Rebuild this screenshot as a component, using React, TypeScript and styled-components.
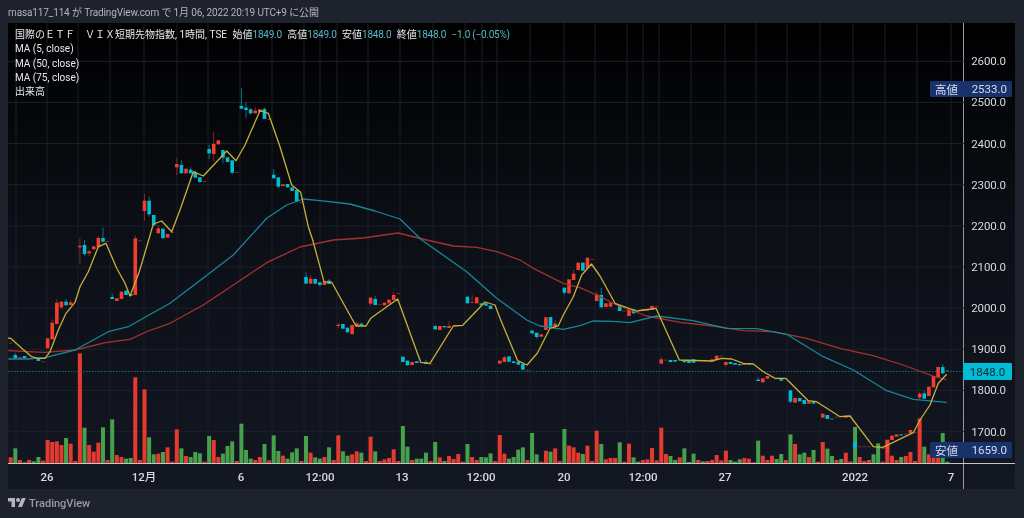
import React from 'react';
import styled, { createGlobalStyle } from 'styled-components';

const FONT = `Roboto, "Noto Sans CJK JP", sans-serif`;

const GlobalStyle = createGlobalStyle`
  html, body {
    margin: 0;
    padding: 0;
    background: #1e222d;
  }
  body {
    font-family: ${FONT};
    overflow: hidden;
  }
`;

const Page = styled.div`
  width: 1024px;
  height: 518px;
  display: flex;
  flex-direction: column;
  background: #1e222d;
  filter: blur(0.35px);
`;

const PublishLine = styled.div`
  height: 23px;
  padding: 5px 8px 0;
  box-sizing: border-box;
  font-size: 10px;
  line-height: 16px;
  letter-spacing: -0.13px;
  color: #b2b5be;
  white-space: nowrap;
`;

const ChartPanel = styled.div`
  position: relative;
  width: 1007px;
  height: 466px;
  margin-left: 8px;
  display: grid;
  grid-template-columns: 956px 51px;
  grid-template-rows: 441px 25px;
  background: linear-gradient(180deg, #000000 0%, #0c0f16 45%, #131722 100%);
`;

const Plot = styled.div`
  position: relative;
  overflow: hidden;
`;

const ChartSvg = styled.svg`
  display: block;
  width: 956px;
  height: 441px;
`;

const Legend = styled.div`
  position: absolute;
  left: 7px;
  top: 5px;
  font-size: 10px;
  line-height: 14.25px;
  color: #e6e8ee;
  white-space: nowrap;
`;

const LegendRow = styled.div`
  display: flex;
  gap: 5.5px;
`;

const LegendItem = styled.span`
  display: inline-flex;
`;

const LegendValue = styled.span`
  color: #53b9c4;
  letter-spacing: -0.25px;
`;

const PriceAxis = styled.div`
  display: flex;
  flex-direction: column;
  align-items: center;
  padding: 17.7px 2px 0 0;
  box-sizing: border-box;
  border-left: 1px solid #9598a1;
  margin-left: -1px;
`;

const PriceTick = styled.div`
  flex: 0 0 41.15px;
  display: flex;
  align-items: center;
  font-size: 11.5px;
  letter-spacing: -0.15px;
  color: #d8dae0;
`;

const TimeAxis = styled.div`
  position: relative;
  border-top: 1px solid #c4c6cc;
  margin-top: -1px;
`;

const TimeLabel = styled.span<{ $x: number }>`
  position: absolute;
  top: 4px;
  left: ${p => p.$x}px;
  transform: translateX(-50%);
  font-size: 11.5px;
  line-height: 18px;
  font-weight: 500;
  color: #d8dae0;
  white-space: nowrap;
`;

const AxisCorner = styled.div`
  border-top: 1px solid #c4c6cc;
  border-left: 1px solid #9598a1;
  margin: -1px 0 0 -1px;
`;

const PriceTag = styled.div<{ $top: number }>`
  position: absolute;
  top: ${p => p.$top}px;
  right: 3px;
  width: 82px;
  height: 16px;
  padding: 0 5px;
  box-sizing: border-box;
  display: flex;
  justify-content: space-between;
  align-items: center;
  border-radius: 1px;
  background: #18326b;
  color: #d8dee9;
  font-size: 11.5px;
`;

const LastPrice = styled.div`
  position: absolute;
  top: 340px;
  right: 3px;
  width: 49px;
  height: 17px;
  display: flex;
  justify-content: center;
  align-items: center;
  border-radius: 1px;
  background: #00bcd4;
  color: #0d2a30;
  font-size: 11.5px;
`;

const Footer = styled.div`
  flex: 1;
  display: flex;
  align-items: center;
  gap: 3px;
  padding: 0 8px 1px;
  color: #9a9da6;
  font-size: 11px;
  font-weight: 500;
`;

const BODY_RED = '#f23d2f';
const BODY_CYAN = '#00bcd4';
const WICK_RED = '#8f2c28';
const WICK_CYAN = '#0b7f92';

const xOf = (i: number) => 10.7 + 4.614 * i;

// volume bar tops as read off the chart, negative = green
const VOL_A = [
  712, -685, 720, -727, 720, -724, -711, 722, 660, 666, 664, 675, -654, 671, 723, 400, -623, 675, 695, 668, -622, 720,
  -598, 705, 711, -716, -714, 472, 720, 508, -652, -703, 701, -696, 682, 725, 628, -685, 708, -711, -696, -700, 725,
  -648, 660, 711, -701, -678, -664, 723, -611, -690, -716, 720, 711, -672, 721, -646, -693, 707, -716, -697, -685,
];
const VOL_B = [
  663, -588, 638, -652, -656, 651, -622, 660, 586, -634, -647, 643, 634, -638, 663, 590, -634, 663, 658, 654, 628, 663,
  -558, -620, 660, -656, -656, -638, 663, -606, 652, -663, 648, 657, 642, 665, -612, 651, 660, -651, -652, -640, 663,
  585, 641, -656, -651, -629, -622, 660, -579, -643, 665, 632, -635, 625, 663, -567, 617, 622, 638, -642, 617, 663, 572,
  -612, 658, 654, 654, -607, 665, 611, -652, -665, 660, 658, 624, 661, 563, 642, -648, -660, 652, -625, -666, -641, 660,
  -664, 663, 660, 645, 661, 632, -660, -665, -658, 654, 656, 667, -602, 647, 660, 647, -657, -642, 660, -583, 612, -643,
  -638, 651, -630, 665, 606, -626, -648, 660, -657, 638, 664, -561, 651, 663, 660, -643, -610, 665, 599, 647, 660, -651,
  648, 636, 663, 535, -620, 643, 652, 652, -579, -665,
];

const volumes = [
  ...VOL_A.map(v => ({ top: 220 + Math.abs(v) / 3, up: v > 0 })),
  ...VOL_B.map(v => ({ top: 240 + Math.abs(v) / 3, up: v > 0 })),
];

type Row = [number, number, number, number, number, string];

// [index, body top, body bottom, wick top, wick bottom, kind], r/c = body, d = thin dash
const group = (base: number, rows: Row[]) =>
  rows.map(([i, t, b, wt, wb, k]) => ({
    i,
    top: base + t / 3,
    bot: base + b / 3,
    wt: base + (wt || t) / 3,
    wb: base + (wb || b) / 3,
    k,
  }));

const candles = [
  ...group(330, [
    [0, 38, 40, 0, 0, 'dr'],
    [1, 75, 85, 69, 86, 'c'],
    [2, 82, 85, 0, 0, 'r'],
    [3, 78, 84, 0, 0, 'c'],
    [4, 86, 88, 0, 0, 'dr'],
    [6, 87, 93, 0, 0, 'c'],
    [7, 94, 96, 0, 0, 'dr'],
  ]),
  ...group(220, [
    [8, 355, 385, 0, 0, 'r'],
    [9, 308, 358, 298, 0, 'r'],
    [10, 248, 312, 238, 0, 'r'],
    [11, 245, 262, 0, 266, 'r'],
    [12, 245, 256, 238, 0, 'c'],
    [13, 247, 255, 240, 0, 'r'],
  ]),
  ...group(80, [
    [15, 497, 502, 475, 553, 'r'],
    [16, 495, 522, 480, 527, 'c'],
    [17, 514, 520, 508, 528, 'r'],
    [18, 499, 508, 0, 0, 'r'],
    [19, 474, 502, 468, 0, 'r'],
    [20, 474, 485, 442, 488, 'c'],
    [21, 483, 485, 0, 0, 'dr'],
    [22, 651, 657, 640, 0, 'c'],
    [23, 655, 663, 0, 0, 'r'],
    [24, 635, 657, 0, 0, 'r'],
    [25, 632, 645, 0, 0, 'c'],
    [26, 642, 648, 0, 0, 'c'],
    [27, 475, 645, 466, 0, 'r'],
    [28, 481, 483, 0, 0, 'dr'],
    [29, 362, 393, 342, 422, 'r'],
    [30, 362, 403, 350, 410, 'c'],
    [31, 405, 436, 0, 0, 'c'],
    [32, 445, 460, 436, 0, 'r'],
    [33, 446, 474, 0, 478, 'c'],
    [34, 462, 473, 0, 0, 'r'],
    [35, 456, 458, 0, 0, 'dr'],
    [36, 252, 262, 235, 285, 'r'],
    [37, 255, 280, 240, 0, 'c'],
    [38, 266, 280, 0, 0, 'r'],
    [39, 269, 280, 262, 0, 'c'],
    [40, 278, 293, 272, 0, 'c'],
    [41, 292, 306, 0, 309, 'c'],
    [42, 303, 305, 0, 0, 'dr'],
    [43, 207, 220, 195, 237, 'c'],
    [44, 192, 222, 155, 245, 'r'],
    [45, 181, 193, 0, 0, 'r'],
    [46, 210, 233, 0, 250, 'c'],
    [47, 232, 246, 0, 0, 'c'],
    [48, 241, 278, 0, 283, 'c'],
    [49, 276, 278, 0, 0, 'dr'],
    [50, 78, 86, 25, 88, 'c'],
    [51, 83, 90, 67, 113, 'c'],
    [52, 88, 100, 85, 104, 'c'],
    [53, 92, 100, 82, 0, 'r'],
    [54, 88, 96, 0, 0, 'r'],
    [55, 87, 117, 83, 0, 'c'],
    [56, 117, 119, 0, 0, 'dr'],
    [57, 284, 295, 268, 0, 'c'],
    [58, 292, 320, 0, 325, 'c'],
    [59, 313, 318, 0, 0, 'r'],
    [60, 312, 322, 0, 0, 'c'],
    [61, 322, 333, 0, 0, 'c'],
    [62, 330, 365, 0, 0, 'c'],
    [63, 366, 368, 0, 0, 'dr'],
  ]),
  ...group(240, [
    [64, 111, 131, 97, 0, 'c'],
    [65, 116, 131, 105, 0, 'r'],
    [66, 117, 131, 0, 0, 'c'],
    [67, 127, 135, 0, 140, 'c'],
    [68, 124, 135, 0, 0, 'r'],
    [69, 122, 132, 117, 0, 'c'],
    [71, 254, 258, 250, 265, 'r'],
    [72, 252, 266, 0, 0, 'c'],
    [73, 263, 277, 0, 0, 'c'],
    [74, 255, 282, 0, 285, 'r'],
    [75, 250, 258, 245, 0, 'r'],
    [76, 251, 257, 248, 0, 'c'],
    [78, 173, 191, 0, 198, 'r'],
    [79, 177, 195, 168, 0, 'c'],
    [80, 193, 195, 0, 0, 'dr'],
    [81, 188, 196, 0, 0, 'r'],
    [82, 179, 190, 0, 0, 'r'],
    [83, 165, 180, 155, 0, 'r'],
    [84, 159, 161, 0, 0, 'dr'],
    [85, 350, 366, 0, 0, 'c'],
    [86, 362, 376, 0, 0, 'c'],
    [87, 366, 375, 0, 0, 'r'],
    [88, 364, 369, 0, 0, 'c'],
    [90, 366, 372, 360, 0, 'c'],
    [91, 371, 373, 0, 0, 'dr'],
    [92, 258, 268, 255, 270, 'c'],
    [93, 258, 270, 0, 0, 'r'],
    [94, 258, 262, 0, 0, 'c'],
    [95, 258, 264, 242, 0, 'r'],
    [99, 170, 190, 0, 0, 'c'],
    [100, 187, 189, 165, 0, 'r'],
    [101, 172, 190, 0, 0, 'r'],
    [102, 190, 195, 0, 0, 'c'],
    [103, 190, 197, 0, 0, 'c'],
    [104, 197, 207, 0, 0, 'c'],
    [106, 362, 371, 0, 0, 'r'],
    [107, 352, 366, 347, 0, 'r'],
    [108, 349, 365, 0, 0, 'c'],
    [109, 364, 369, 0, 0, 'c'],
    [110, 366, 374, 0, 0, 'c'],
    [111, 372, 389, 0, 0, 'c'],
    [112, 390, 392, 0, 0, 'dr'],
    [113, 272, 280, 268, 283, 'c'],
    [114, 278, 291, 0, 295, 'c'],
    [115, 283, 290, 0, 0, 'r'],
    [116, 232, 270, 0, 0, 'r'],
    [117, 231, 260, 0, 0, 'c'],
    [118, 251, 262, 240, 0, 'r'],
    [120, 143, 158, 0, 165, 'c'],
    [121, 118, 160, 0, 0, 'r'],
    [122, 101, 120, 88, 0, 'r'],
    [123, 68, 90, 0, 0, 'r'],
    [124, 68, 92, 0, 0, 'c'],
    [125, 53, 85, 0, 0, 'r'],
    [126, 57, 59, 0, 0, 'dr'],
    [127, 163, 183, 155, 0, 'r'],
    [128, 165, 202, 143, 0, 'c'],
    [129, 190, 201, 0, 0, 'r'],
    [130, 188, 200, 0, 0, 'r'],
    [132, 195, 213, 0, 0, 'c'],
    [133, 212, 214, 0, 0, 'dr'],
    [134, 208, 228, 0, 0, 'r'],
    [135, 208, 220, 0, 0, 'c'],
    [137, 208, 213, 0, 0, 'r'],
    [138, 207, 212, 0, 0, 'r'],
    [139, 198, 210, 0, 0, 'r'],
    [140, 198, 200, 0, 0, 'dr'],
    [141, 358, 371, 350, 0, 'r'],
    [142, 359, 361, 0, 0, 'dr'],
    [143, 360, 366, 0, 0, 'c'],
    [144, 360, 365, 0, 0, 'c'],
    [146, 362, 367, 0, 0, 'c'],
    [147, 363, 369, 0, 0, 'c'],
    [148, 358, 368, 0, 0, 'c'],
    [152, 358, 365, 0, 0, 'r'],
    [153, 347, 358, 0, 0, 'r'],
    [154, 347, 349, 0, 0, 'dr'],
    [155, 366, 375, 0, 380, 'r'],
    [156, 366, 372, 0, 0, 'c'],
    [157, 369, 374, 0, 0, 'c'],
    [158, 372, 376, 0, 0, 'c'],
    [159, 370, 375, 0, 0, 'r'],
    [160, 370, 374, 0, 0, 'c'],
    [162, 419, 423, 412, 0, 'c'],
    [163, 415, 427, 0, 0, 'r'],
    [164, 408, 416, 0, 0, 'r'],
    [165, 409, 411, 0, 0, 'dr'],
    [166, 414, 417, 0, 0, 'c'],
    [167, 416, 422, 0, 0, 'c'],
    [169, 451, 485, 0, 490, 'c'],
    [170, 474, 488, 0, 0, 'r'],
    [171, 474, 484, 0, 0, 'c'],
    [172, 480, 492, 0, 0, 'c'],
    [173, 484, 491, 0, 0, 'r'],
    [174, 484, 491, 0, 0, 'c'],
    [175, 488, 490, 0, 0, 'dr'],
    [176, 521, 533, 0, 0, 'r'],
    [177, 525, 537, 0, 0, 'c'],
    [178, 536, 538, 0, 0, 'c'],
    [179, 530, 532, 0, 0, 'dr'],
    [181, 527, 533, 0, 0, 'r'],
    [182, 527, 529, 0, 0, 'dr'],
    [183, 605, 625, 0, 0, 'c'],
    [184, 619, 621, 0, 0, 'dr'],
    [185, 619, 621, 0, 0, 'dr'],
    [186, 619, 621, 0, 0, 'dr'],
    [187, 618, 620, 0, 0, 'dr'],
    [188, 620, 624, 0, 0, 'c'],
    [189, 624, 626, 0, 0, 'dr'],
    [190, 600, 640, 0, 0, 'r'],
    [191, 587, 600, 0, 0, 'r'],
    [192, 583, 590, 0, 0, 'r'],
    [193, 583, 586, 0, 0, 'c'],
    [194, 581, 583, 0, 0, 'dr'],
    [195, 570, 580, 0, 0, 'r'],
    [196, 576, 578, 0, 0, 'dr'],
    [197, 461, 473, 455, 480, 'r'],
    [198, 460, 476, 452, 0, 'c'],
    [199, 440, 468, 0, 0, 'r'],
    [200, 408, 442, 0, 0, 'r'],
    [201, 381, 412, 0, 0, 'r'],
    [202, 381, 400, 373, 402, 'c'],
    [203, 391, 393, 0, 0, 'dc'],
  ]),
];

const MA5 = [
  [8, 338], [10.7, 338.3], [21.7, 348.3], [31.7, 356.7], [38, 358.3], [45, 358.3], [50, 351.7], [58.3, 330], [66, 313.3],
  [75, 302.3], [80, 286.7], [88.3, 271.7], [98.3, 246.7], [106, 243.3], [116.7, 268.3], [125, 283.3], [130, 296],
  [139.3, 271.7], [146.7, 246.7], [153.3, 224], [161.7, 221], [171.7, 231.7], [180, 210], [193.3, 171.7], [203.3, 176],
  [226.7, 151], [236, 160.7], [245, 145], [260, 110.7], [268.3, 113.3], [280, 146.7], [291.7, 185], [300.7, 192.3],
  [308.3, 226.7], [312.7, 240], [324, 281.7], [331.7, 282.3], [356, 326], [366, 326], [370.7, 318.3], [397.7, 299],
  [420.7, 362.3], [430, 363.3], [453.3, 326], [462.7, 325.3], [485, 302], [495, 305], [500, 318.3], [517.7, 360.7],
  [527, 365], [537.3, 353.3], [550, 328.3], [558.3, 325.7], [563.3, 315], [573.3, 296.7], [581.7, 275], [591.5, 264],
  [600, 276], [615, 303.3], [636.7, 311], [656, 308.3], [679.3, 360], [711.7, 361], [721.7, 358.3], [731.7, 359],
  [743.3, 363.3], [753.3, 364], [763.3, 371.7], [775, 378.3], [785.7, 378.3], [808.3, 400.7], [816.7, 401.7],
  [840, 416.7], [850, 416], [873.3, 446.7], [882.7, 447.3], [913.3, 432.7], [920, 420], [930, 405], [938.3, 383.3],
  [946.7, 374.3],
];

const MA50 = [
  [8.3, 359], [26.7, 359], [45, 357.7], [75, 350], [108.3, 331.7], [128.3, 326.7], [143.3, 318.3], [170, 303.3],
  [203.3, 278], [233.3, 255], [266.7, 218.3], [286.7, 205], [303.3, 199], [320, 200.7], [350, 204], [375, 211],
  [400, 219], [421.7, 240], [466.7, 271.7], [496.7, 298.3], [526.7, 320], [540, 326], [563.3, 329.3], [580, 325.7],
  [593, 321], [613, 321.3], [630, 322.7], [656.7, 316], [693, 320.7], [726.7, 328.3], [756.7, 328.7], [786.7, 334.3],
  [823.3, 356.7], [853.3, 370], [886.7, 390.7], [913.3, 399.3], [946.7, 402.3],
];

const MA75 = [
  [8.3, 350.7], [26.7, 351.7], [45, 352.3], [75, 350], [106.7, 342.3], [130, 339.3], [148.3, 331], [170, 323.3],
  [203.3, 305], [233.3, 285], [266.7, 262.7], [300, 247], [333.3, 240], [363, 238], [398, 233], [426.7, 240],
  [453.3, 246], [476.7, 247.3], [496.7, 251.7], [520, 260], [533.3, 268.3], [563.3, 283.3], [580, 287.7], [596.7, 295],
  [616.7, 305], [646.7, 316], [680, 322.3], [713, 326], [743, 330.7], [773, 331.7], [806.7, 338.3], [840, 348.3],
  [873, 355.7], [903, 365], [933, 376], [946.7, 380],
];

const GRID_X = [
  16, 47, 78, 110, 144, 177, 208, 240, 272, 304, 320, 337, 368, 400, 433, 465, 482, 497, 530, 564, 595, 627, 643, 659,
  691, 725, 756, 787, 820, 853, 885, 917, 951,
];
const PRICES = [2600, 2500, 2400, 2300, 2200, 2100, 2000, 1900, 1800, 1700];
const TIME_LABELS: [string, number][] = [
  ['26', 47],
  ['12月', 144],
  ['6', 241],
  ['12:00', 320],
  ['13', 402],
  ['12:00', 481],
  ['20', 564],
  ['12:00', 643],
  ['27', 725],
  ['2022', 855],
  ['7', 951],
];
const LEGEND_VALUES = [
  ['始値', '1849.0'],
  ['高値', '1849.0'],
  ['安値', '1848.0'],
  ['終値', '1848.0'],
];

const points = (line: number[][]) => line.map(p => p.join(',')).join(' ');

const Chart = () => (
  <ChartSvg viewBox="8 23 956 441">
    {GRID_X.map(x => (
      <line key={x} x1={x} x2={x} y1={23} y2={464} stroke="#1a1e29" />
    ))}
    {PRICES.map((_, n) => (
      <line key={n} x1={8} x2={964} y1={61.3 + n * 41.15} y2={61.3 + n * 41.15} stroke="#1c202b" />
    ))}
    {volumes.map((v, i) => (
      <rect
        key={i}
        x={xOf(i) - 2}
        width={4}
        y={v.top}
        height={463.5 - v.top}
        fill={v.up ? '#e53a30' : '#47a04b'}
      />
    ))}
    <line x1={8} x2={964} y1={371.5} y2={371.5} stroke="#1b6a78" strokeDasharray="1.5 1.5" />
    {candles.map(c => {
      const red = c.k === 'r' || c.k === 'dr';
      const x = xOf(c.i);
      if (c.k[0] === 'd') {
        return <rect key={c.i} x={x - 1.7} width={3.4} y={c.top} height={0.9} fill={red ? WICK_RED : WICK_CYAN} />;
      }
      return (
        <g key={c.i}>
          <line x1={x} x2={x} y1={c.wt} y2={c.wb} stroke={red ? WICK_RED : WICK_CYAN} strokeWidth={0.9} />
          <rect x={x - 1.8} width={3.6} y={c.top} height={c.bot - c.top} fill={red ? BODY_RED : BODY_CYAN} />
        </g>
      );
    })}
    <polyline points={points(MA75)} fill="none" stroke="#a5322f" strokeWidth={1.3} strokeLinejoin="round" />
    <polyline points={points(MA50)} fill="none" stroke="#17869a" strokeWidth={1.3} strokeLinejoin="round" />
    <polyline points={points(MA5)} fill="none" stroke="#c6b138" strokeWidth={1.3} strokeLinejoin="round" />
  </ChartSvg>
);

const TvLogo = () => (
  <svg width="18" height="14" viewBox="0 0 36 28" fill="#b2b5be">
    <path d="M14 22H7V11H0V4h14v18zM28 22h-8l7.5-18h8L28 22z" />
    <circle cx="20" cy="8" r="4" />
  </svg>
);

export default function App() {
  return (
    <Page>
      <GlobalStyle />
      <PublishLine>masa117_114 が TradingView.com で 1月 06, 2022 20:19 UTC+9 に公開</PublishLine>
      <ChartPanel>
        <Plot>
          <Chart />
          <Legend>
            <LegendRow>
              <span>国際のＥＴＦ　ＶＩＸ短期先物指数, 1時間, TSE</span>
              {LEGEND_VALUES.map(([name, value]) => (
                <LegendItem key={name}>
                  {name}
                  <LegendValue>{value}</LegendValue>
                </LegendItem>
              ))}
              <LegendValue>−1.0 (−0.05%)</LegendValue>
            </LegendRow>
            <div>MA (5, close)</div>
            <div>MA (50, close)</div>
            <div>MA (75, close)</div>
            <div>出来高</div>
          </Legend>
        </Plot>
        <PriceAxis>
          {PRICES.map(p => (
            <PriceTick key={p}>{p.toFixed(1)}</PriceTick>
          ))}
        </PriceAxis>
        <TimeAxis>
          {TIME_LABELS.map(([label, x]) => (
            <TimeLabel key={label + x} $x={x - 8}>
              {label}
            </TimeLabel>
          ))}
        </TimeAxis>
        <AxisCorner />
        <PriceTag $top={58}>
          <span>高値</span>
          <span>2533.0</span>
        </PriceTag>
        <LastPrice>1848.0</LastPrice>
        <PriceTag $top={419}>
          <span>安値</span>
          <span>1659.0</span>
        </PriceTag>
      </ChartPanel>
      <Footer>
        <TvLogo />
        TradingView
      </Footer>
    </Page>
  );
}
